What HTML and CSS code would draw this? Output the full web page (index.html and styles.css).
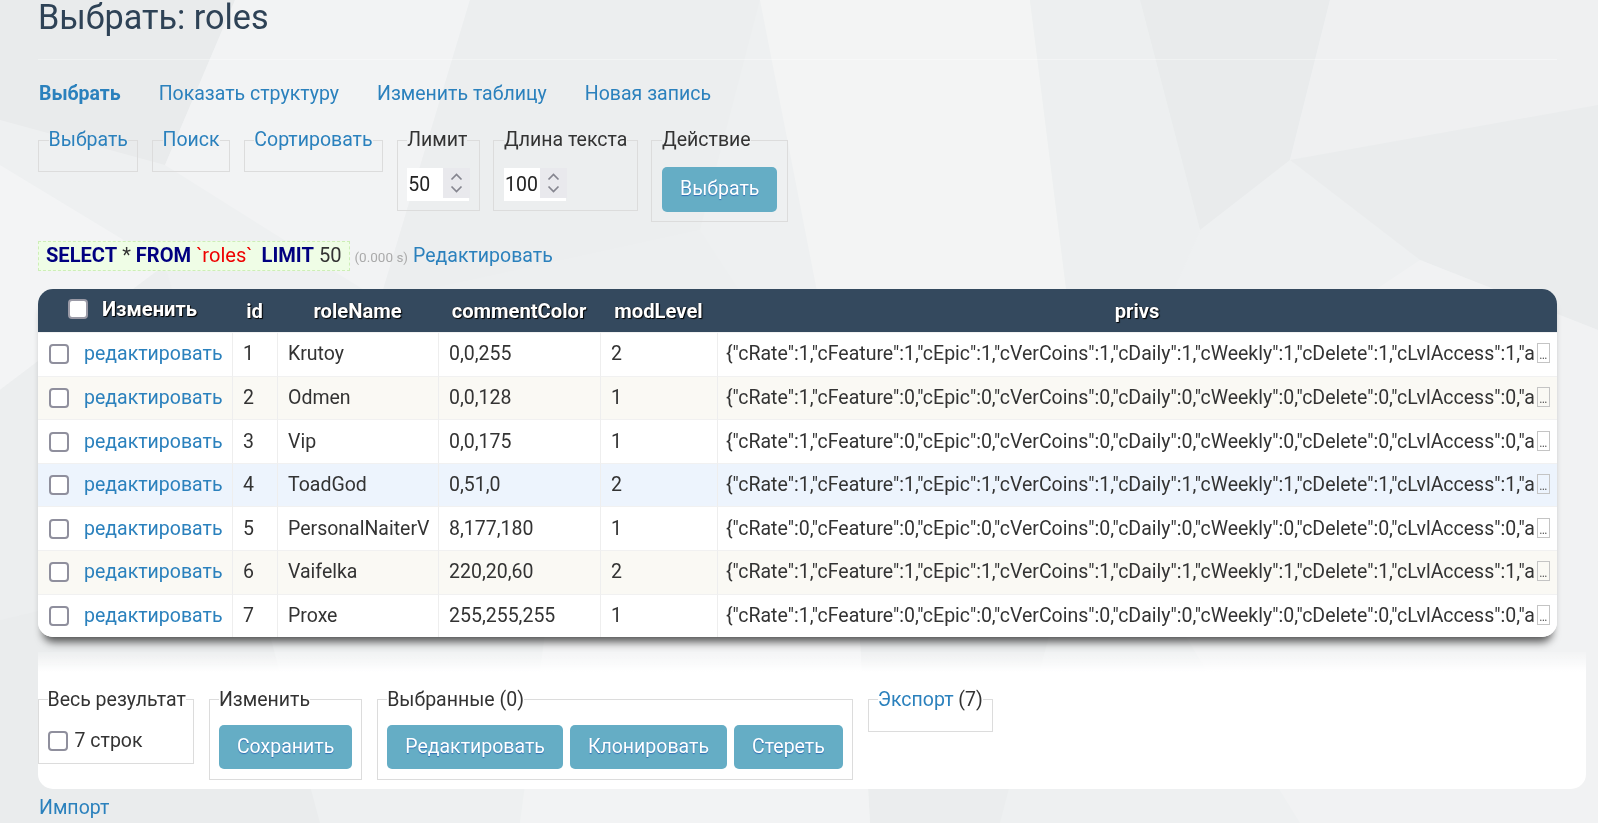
FILE: index.html
```html
<!DOCTYPE html>
<html lang="ru">
<head>
<meta charset="utf-8">
<title>Выбрать: roles</title>
<link rel="stylesheet" href="styles.css">
</head>
<body>
<svg class="bg" width="1598" height="823" viewBox="0 0 1598 823" aria-hidden="true">
  <rect width="1598" height="823" fill="#eef0f1"/>
  <polygon points="0,0 235,0 165,165 0,120" fill="#e9ebec"/>
  <polygon points="0,165 165,265 0,390" fill="#f3f4f5"/>
  <polygon points="235,0 470,0 380,300 165,165" fill="#f2f3f4"/>
  <polygon points="470,0 760,0 700,230 380,300" fill="#eceeef"/>
  <polygon points="760,0 1030,0 1090,480 850,460" fill="#f3f4f4"/>
  <polygon points="1030,0 1140,0 1200,230 1090,480" fill="#edeff0"/>
  <polygon points="1140,0 1330,0 1290,160 1200,230" fill="#e9ebec"/>
  <polygon points="1330,0 1598,0 1598,105 1290,160" fill="#eff0f1"/>
  <polygon points="1290,160 1598,105 1598,330 1420,260" fill="#eaeced"/>
  <polygon points="380,300 700,230 850,460 560,520" fill="#edeff0"/>
  <polygon points="0,390 165,265 250,560 0,620" fill="#eceeef"/>
  <polygon points="850,460 1090,480 1000,823 870,823" fill="#ebedee"/>
  <polygon points="1090,480 1420,260 1598,330 1598,823 1300,823" fill="#f1f2f3"/>
  <polygon points="0,620 250,560 320,823 0,823" fill="#eaeced"/>
  <polygon points="560,520 850,460 870,823 520,823" fill="#f2f3f4"/>
</svg>

<div class="content">
  <h2 class="title">Выбрать: roles</h2>

  <p class="links">
    <a class="link link-active" href="#">Выбрать</a>
    <a class="link" href="#">Показать структуру</a>
    <a class="link" href="#">Изменить таблицу</a>
    <a class="link" href="#">Новая запись</a>
  </p>

  <form class="select-form">
    <fieldset class="fs"><legend class="lg"><a class="link" href="#">Выбрать</a></legend></fieldset>
    <fieldset class="fs"><legend class="lg"><a class="link" href="#">Поиск</a></legend></fieldset>
    <fieldset class="fs"><legend class="lg"><a class="link" href="#">Сортировать</a></legend></fieldset>
    <fieldset class="fs"><legend class="lg">Лимит</legend>
      <div class="num"><input class="num-input" type="text" value="50"><span class="spin"><svg width="27" height="30" viewBox="0 0 27 30"><path d="M8.5 11.5 L13.5 6.5 L18.5 11.5" fill="none" stroke="#85858f" stroke-width="1.7"/><path d="M8.5 18.5 L13.5 23.5 L18.5 18.5" fill="none" stroke="#85858f" stroke-width="1.7"/></svg></span></div>
    </fieldset>
    <fieldset class="fs"><legend class="lg">Длина текста</legend>
      <div class="num"><input class="num-input" type="text" value="100"><span class="spin"><svg width="27" height="30" viewBox="0 0 27 30"><path d="M8.5 11.5 L13.5 6.5 L18.5 11.5" fill="none" stroke="#85858f" stroke-width="1.7"/><path d="M8.5 18.5 L13.5 23.5 L18.5 18.5" fill="none" stroke="#85858f" stroke-width="1.7"/></svg></span></div>
    </fieldset>
    <fieldset class="fs"><legend class="lg">Действие</legend>
      <button class="btn btn-top" type="button">Выбрать</button>
    </fieldset>
  </form>

  <p class="sql">
    <code class="code"><b class="kw">SELECT</b> * <b class="kw">FROM</b> <span class="ident">`roles`</span> <b class="kw">LIMIT</b> 50</code><span class="time">(0.000 s)</span><a class="link edit-sql" href="#">Редактировать</a>
  </p>

  <div class="table-wrap">
    <table class="grid">
      <colgroup>
        <col class="w-edit"><col class="w-id"><col class="w-name"><col class="w-color"><col class="w-mod"><col class="w-privs">
      </colgroup>
      <thead>
        <tr>
          <th class="th-edit"><span class="th-first"><input class="cb cb-head" type="checkbox">Изменить</span></th>
          <th>id</th>
          <th>roleName</th>
          <th>commentColor</th>
          <th>modLevel</th>
          <th>privs</th>
        </tr>
      </thead>
      <tbody>
        <tr>
          <td class="c-edit"><span class="edit-cell"><input class="cb" type="checkbox"><a class="link" href="#">редактировать</a></span></td>
          <td>1</td><td>Krutoy</td><td>0,0,255</td><td>2</td>
          <td class="c-privs">{"cRate":1,"cFeature":1,"cEpic":1,"cVerCoins":1,"cDaily":1,"cWeekly":1,"cDelete":1,"cLvlAccess":1,"a<span class="more">…</span></td>
        </tr>
        <tr class="alt">
          <td class="c-edit"><span class="edit-cell"><input class="cb" type="checkbox"><a class="link" href="#">редактировать</a></span></td>
          <td>2</td><td>Odmen</td><td>0,0,128</td><td>1</td>
          <td class="c-privs">{"cRate":1,"cFeature":0,"cEpic":0,"cVerCoins":0,"cDaily":0,"cWeekly":0,"cDelete":0,"cLvlAccess":0,"a<span class="more">…</span></td>
        </tr>
        <tr>
          <td class="c-edit"><span class="edit-cell"><input class="cb" type="checkbox"><a class="link" href="#">редактировать</a></span></td>
          <td>3</td><td>Vip</td><td>0,0,175</td><td>1</td>
          <td class="c-privs">{"cRate":1,"cFeature":0,"cEpic":0,"cVerCoins":0,"cDaily":0,"cWeekly":0,"cDelete":0,"cLvlAccess":0,"a<span class="more">…</span></td>
        </tr>
        <tr class="hover">
          <td class="c-edit"><span class="edit-cell"><input class="cb" type="checkbox"><a class="link" href="#">редактировать</a></span></td>
          <td>4</td><td>ToadGod</td><td>0,51,0</td><td>2</td>
          <td class="c-privs">{"cRate":1,"cFeature":1,"cEpic":1,"cVerCoins":1,"cDaily":1,"cWeekly":1,"cDelete":1,"cLvlAccess":1,"a<span class="more">…</span></td>
        </tr>
        <tr>
          <td class="c-edit"><span class="edit-cell"><input class="cb" type="checkbox"><a class="link" href="#">редактировать</a></span></td>
          <td>5</td><td>PersonalNaiterV</td><td>8,177,180</td><td>1</td>
          <td class="c-privs">{"cRate":0,"cFeature":0,"cEpic":0,"cVerCoins":0,"cDaily":0,"cWeekly":0,"cDelete":0,"cLvlAccess":0,"a<span class="more">…</span></td>
        </tr>
        <tr class="alt">
          <td class="c-edit"><span class="edit-cell"><input class="cb" type="checkbox"><a class="link" href="#">редактировать</a></span></td>
          <td>6</td><td>Vaifelka</td><td>220,20,60</td><td>2</td>
          <td class="c-privs">{"cRate":1,"cFeature":1,"cEpic":1,"cVerCoins":1,"cDaily":1,"cWeekly":1,"cDelete":1,"cLvlAccess":1,"a<span class="more">…</span></td>
        </tr>
        <tr>
          <td class="c-edit"><span class="edit-cell"><input class="cb" type="checkbox"><a class="link" href="#">редактировать</a></span></td>
          <td>7</td><td>Proxe</td><td>255,255,255</td><td>1</td>
          <td class="c-privs">{"cRate":1,"cFeature":0,"cEpic":0,"cVerCoins":0,"cDaily":0,"cWeekly":0,"cDelete":0,"cLvlAccess":0,"a<span class="more">…</span></td>
        </tr>
      </tbody>
    </table>
  </div>

  <div class="footer">
    <div class="footer-inner">
      <fieldset class="fs fs-narrow"><legend class="lg">Весь результат</legend>
        <label class="all-rows"><input class="cb" type="checkbox">7 строк</label>
      </fieldset>
      <fieldset class="fs"><legend class="lg">Изменить</legend>
        <div class="btn-row"><button class="btn" type="button">Сохранить</button></div>
      </fieldset>
      <fieldset class="fs"><legend class="lg">Выбранные (0)</legend>
        <div class="btn-row">
          <button class="btn" type="button">Редактировать</button>
          <button class="btn" type="button">Клонировать</button>
          <button class="btn" type="button">Стереть</button>
        </div>
      </fieldset>
      <fieldset class="fs"><legend class="lg"><a class="link" href="#">Экспорт</a> (7)</legend></fieldset>
    </div>
  </div>

  <p class="import"><a class="link" href="#">Импорт</a></p>
</div>
</body>
</html>
```

FILE: styles.css
```css
html, body {
  margin: 0;
  padding: 0;
}

body {
  font-family: "Roboto", "Noto Sans", sans-serif;
  font-size: 19.5px;
  line-height: 24px;
  color: #333;
  background: #eef0f1;
  overflow: hidden;
}

.bg {
  position: fixed;
  left: 0;
  top: 0;
  z-index: -1;
}

.content {
  margin-left: 38px;
  width: 1519px;
}

.link {
  color: #2b81bd;
  text-decoration: none;
}

.title {
  margin: 0;
  font-size: 34.2px;
  line-height: 34px;
  font-weight: 400;
  color: #2e4256;
  padding-bottom: 25px;
  border-bottom: 1px solid rgba(255, 255, 255, 0.35);
}

.links {
  margin: 22px 0 0;
  display: flex;
  gap: 38px;
  padding-left: 1px;
}

.link-active {
  font-weight: 700;
}

.select-form {
  margin: 22px 0 0;
  display: flex;
  align-items: flex-start;
  gap: 13.5px;
}

.fs {
  margin: 0;
  padding: 9.6px;
  border: 1px solid #dcdcdc;
  min-width: 0;
}

.lg {
  padding: 0;
  line-height: 24px;
  color: #333;
}

.num {
  margin-top: 6px;
  display: flex;
  width: 62px;
  height: 33px;
  background: #fff;
}

.num-input {
  width: 35px;
  border: 0;
  padding: 0 0 0 1px;
  margin: 0;
  background: transparent;
  font-family: "Roboto", sans-serif;
  font-size: 19.5px;
  color: #222;
  outline: none;
}

.spin {
  width: 27px;
  height: 30px;
  background: #e9e9ed;
  display: block;
}

.spin svg {
  display: block;
}

.btn {
  font-family: "Roboto", sans-serif;
  font-size: 19.5px;
  line-height: 24px;
  height: 44px;
  padding: 0 18px;
  border: 0;
  border-radius: 5px;
  background: #65adc5;
  color: #fff;
  text-shadow: 0 1px 1px rgba(0, 60, 170, 0.55);
  cursor: pointer;
}

.btn-top {
  margin-top: 5px;
  height: 45px;
  padding: 0 18px;
}

.sql {
  margin: 19px 0 0;
  display: flex;
  align-items: baseline;
}

.code {
  font-family: "Roboto", sans-serif;
  font-size: 20.1px;
  line-height: 24px;
  padding: 1px 7px 3px;
  background: #effde6;
  border: 1px dashed #cdeeb7;
  color: #333;
}

.kw {
  color: #000080;
  font-weight: 700;
}

.ident {
  color: #e00;
  margin-right: 4px;
}

.time {
  margin-left: 5px;
  font-size: 13.5px;
  color: #aaa;
}

.edit-sql {
  margin-left: 5px;
}

.table-wrap {
  margin-top: 18px;
  width: 1519px;
  border-radius: 15px;
  overflow: hidden;
  background: #fff;
  box-shadow: 0 10px 8px -5px rgba(0, 0, 0, 0.65);
}

.grid {
  border-collapse: separate;
  border-spacing: 0;
  table-layout: fixed;
  width: 1519px;
}

.w-edit { width: 194px; }
.w-id { width: 45px; }
.w-name { width: 161px; }
.w-color { width: 162px; }
.w-mod { width: 117px; }
.w-privs { width: 840px; }

.grid th {
  height: 43px;
  padding: 0 6px;
  background: #34495e;
  color: #fff;
  font-size: 20.2px;
  font-weight: 700;
  text-align: center;
  white-space: nowrap;
  text-shadow: 1px 1px 1px #000, 0 0 1px #000;
}

.grid th.th-edit {
  padding-left: 5px;
  padding-right: 10px;
}

.th-first {
  display: inline-flex;
  align-items: center;
  gap: 14px;
}

.grid tbody tr {
  height: 43.57px;
  background: #fff;
}

.grid tbody tr.alt {
  background: #faf9f4;
}

.grid tbody tr.hover {
  background: #edf4fd;
}

.grid td {
  padding: 0 10px;
  border-left: 1px solid #eeeeee;
  border-top: 1px solid #f1f1f1;
  white-space: nowrap;
  overflow: hidden;
}

.grid td.c-edit {
  border-left: 0;
  padding-left: 11px;
}

.grid td.c-privs {
  padding-left: 8px;
}

.edit-cell {
  display: flex;
  align-items: center;
  gap: 15px;
}

.cb {
  appearance: none;
  -webkit-appearance: none;
  box-sizing: border-box;
  width: 20px;
  height: 20px;
  margin: 0;
  border: 2px solid #8f8f9d;
  border-radius: 4px;
  background: #fff;
  flex: none;
}

.cb-head {
  border-color: #9a9aa6;
  text-shadow: none;
}

.more {
  display: inline-block;
  box-sizing: border-box;
  width: 13px;
  height: 20px;
  margin-left: 2px;
  border: 1px solid #c4c4c4;
  font-size: 12px;
  line-height: 22px;
  color: #555;
  text-align: center;
  vertical-align: -3px;
  overflow: hidden;
}

.footer {
  margin-top: 15px;
  margin-right: -29px;
  padding-top: 20px;
  background: linear-gradient(to bottom, rgba(255, 255, 255, 0.15) 0, #fff 20px, #fff 100%);
  border-radius: 0 0 15px 15px;
}

.footer-inner {
  display: flex;
  align-items: flex-start;
  gap: 15px;
  padding: 0 0 9.6px 0;
}

.footer-inner .fs {
  margin-top: 15.4px;
  padding-left: 9px;
  padding-right: 9px;
}

.footer-inner .fs-narrow {
  padding-left: 8.5px;
  padding-right: 7px;
}

.all-rows {
  display: flex;
  align-items: center;
  gap: 7px;
  margin-top: 8px;
  height: 24px;
}

.all-rows .cb {
  width: 20px;
  height: 20px;
}

.btn-row {
  display: flex;
  gap: 7px;
  margin-top: 4px;
}

.import {
  margin: 7px 0 0;
  padding-left: 1px;
}
```
